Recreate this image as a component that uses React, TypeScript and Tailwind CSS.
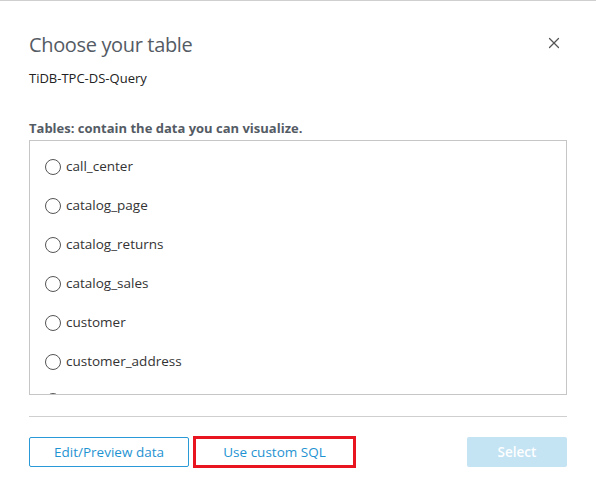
import { X } from "lucide-react";

const TABLES = [
  "call_center",
  "catalog_page",
  "catalog_returns",
  "catalog_sales",
  "customer",
  "customer_address",
  "customer_demographics",
];

export default function App() {
  return (
    <div
      className="w-[596px] h-[492px] bg-white border-t border-[#cfcfcf] text-[#333]"
      style={{ fontFamily: '"Open Sans", "Liberation Sans", sans-serif' }}
    >
      <div className="px-[29px] pt-[30px]">
        {/* Header */}
        <div className="flex items-start justify-between">
          <h1 className="text-[20px] leading-[28px] text-[#545b64] tracking-[-0.35px]">
            Choose your table
          </h1>
          <button className="mt-[3px] mr-[4px] text-[#555]" aria-label="Close">
            <X size={18} strokeWidth={1.6} />
          </button>
        </div>
        <p className="mt-[10px] text-[13px] leading-[18px] text-[#222]">
          TiDB-TPC-DS-Query
        </p>

        <p className="mt-[32px] text-[13px] leading-[18px] font-bold text-[#545b64]">
          Tables: contain the data you can visualize.
        </p>

        {/* Table list */}
        <div className="mt-[3px] h-[255px] border border-[#c6c6c6] overflow-hidden pl-[15px] pt-[6px]">
          {TABLES.map((t) => (
            <label key={t} className="flex items-center h-[39px] cursor-pointer">
              <span className="w-[16px] h-[16px] rounded-full border border-[#555] shrink-0" />
              <span className="ml-[5px] text-[13.5px] text-[#333]">{t}</span>
            </label>
          ))}
        </div>

        <div className="mt-[21px] border-t border-[#cfcfcf]" />

        {/* Footer */}
        <div className="mt-[19px] flex items-center">
          <button className="w-[160px] h-[30px] border border-[#2a9ad6] rounded-[2px] text-[13.5px] text-[#1f93d2]">
            Edit/Preview data
          </button>
          <button className="ml-[4px] w-[163px] h-[32px] border-[3px] border-[#e8141f] text-[13.5px] text-[#1f93d2]">
            Use custom SQL
          </button>
          <button className="ml-auto w-[100px] h-[30px] rounded-[2px] bg-[#c4e3f3] text-[13.5px] font-semibold text-white">
            Select
          </button>
        </div>
      </div>
    </div>
  );
}
